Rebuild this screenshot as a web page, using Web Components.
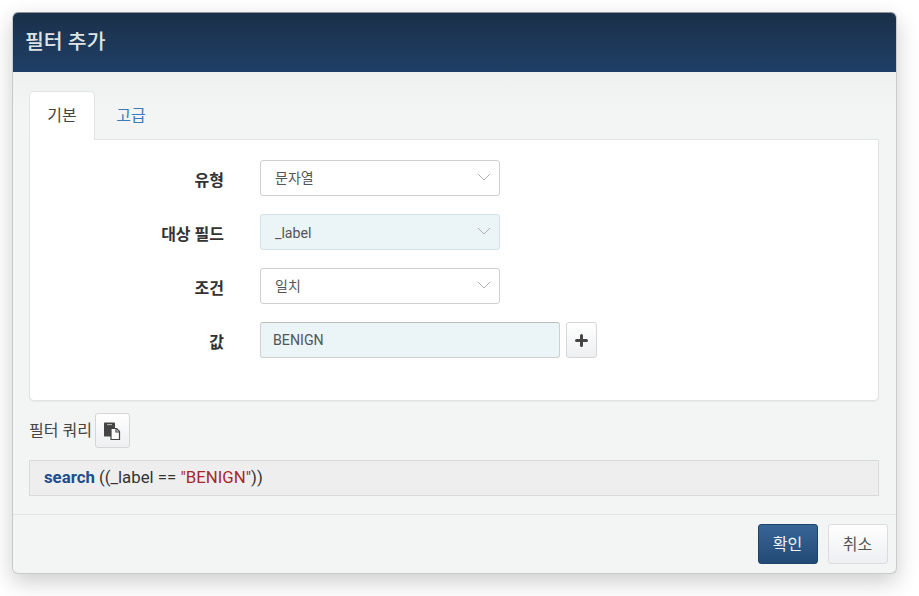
<!DOCTYPE html>
<html lang="ko">
<head>
<meta charset="utf-8">
<title>필터 추가</title>
<style>
  html, body { margin: 0; background: #fff; height: 100%; }
  body { box-sizing: border-box; padding-top: 12px; font-family: Roboto, "Noto Sans CJK KR", sans-serif; color: #444; }
</style>
</head>
<body>
<filter-dialog heading="필터 추가">
  <filter-tabs>
    <tab-item active>기본</tab-item>
    <tab-item>고급</tab-item>
  </filter-tabs>
  <tab-panel>
    <form-row label="유형"><select-box>문자열</select-box></form-row>
    <form-row label="대상 필드"><select-box filled>_label</select-box></form-row>
    <form-row label="조건"><select-box>일치</select-box></form-row>
    <form-row label="값">
      <value-input>BENIGN</value-input>
      <icon-button size="plus"><svg width="13" height="13" viewBox="0 0 13 13"><path d="M6.500 1.500v10M1.500 6.500h10" fill="none" stroke="#444" stroke-width="3" stroke-linecap="round"/></svg></icon-button>
    </form-row>
  </tab-panel>
  <query-head>
    <span>필터 쿼리</span>
    <icon-button size="copy"><svg width="18" height="18" viewBox="0 0 18 18"><path d="M1 1.500C1 .900 1.400.500 2 .500h9c.6 0 1 .4 1 1V14.500H2c-.6 0-1-.4-1-1z" fill="#444"/><path d="M4 2.600h5" stroke="#bbb" stroke-width="1"/><path d="M8 6.500h5.500L16.500 9.500v8H8z" fill="#fbfbfb" stroke="#444" stroke-width="1.200" stroke-linejoin="round"/><path d="M13 6.500v3.500h3.500" fill="none" stroke="#444" stroke-width="1.200"/></svg></icon-button>
  </query-head>
  <query-box><b>search</b> ((_label == <em>"BENIGN"</em>))</query-box>
  <action-button slot="footer" primary>확인</action-button>
  <action-button slot="footer">취소</action-button>
</filter-dialog>

<script>
const define = (name, css, html) => {
  customElements.define(name, class extends HTMLElement {
    connectedCallback(){
      if(this.shadowRoot){ return; }
      this.attachShadow({mode: 'open'});
      this.shadowRoot.innerHTML = `<style>${css}</style>${html(this)}`;
    }
  });
};

define('filter-dialog', `
  :host { box-sizing: border-box; width: 885px; height: 562px; margin: 0 0 0 11.500px;
    background: #f3f4f4; border: 1px solid #c9caca; border-top-color: #8f9499; border-radius: 6px;
    box-shadow: 0 8px 22px rgba(0,0,0,.2); display: flex; flex-direction: column; }
  header { flex: none; box-sizing: border-box; height: 59px; padding: 0 12.500px 5px; display: flex; align-items: center; border-radius: 5px 5px 0 0;
    background: linear-gradient(#1a3049, #1f3f66); color: #dfe3e7; font-size: 20.500px; font-weight: 500; }
  main { flex: 1; padding: 19px 16.500px 0 16.500px;
    background: linear-gradient(#eff0f0, #f3f4f4 40px); }
  footer { flex: none; box-sizing: border-box; height: 59px; border-top: 1px solid #e3e4e4; padding: 9px 8px 0 0;
    display: flex; justify-content: flex-end; gap: 10px; }
`, el => `<header>${el.getAttribute('heading')}</header><main><slot></slot></main><footer><slot name="footer"></slot></footer>`);

define('filter-tabs', `
  :host { display: flex; height: 49px; align-items: stretch; position: relative; z-index: 1; }
`, () => `<slot></slot>`);

define('tab-item', `
  :host { display: block; box-sizing: border-box; width: 72px; height: 49px; padding-top: 13px; text-align: center;
    font-size: 16px; line-height: 21px; color: #3b7cb8; border: 1px solid transparent; border-bottom: 0; border-radius: 5px 5px 0 0; }
  :host([active]) { width: 66px; background: #fff; color: #444; border-color: #e2e3e3; }
`, () => `<slot></slot>`);

define('tab-panel', `
  :host { display: flex; flex-direction: column; gap: 18px; box-sizing: border-box; height: 262px; margin-top: -1px; padding: 20px 0 0;
    background: #fff; border: 1px solid #e2e3e3; border-radius: 0 0 5px 5px; box-shadow: 0 1px 1px rgba(0,0,0,.05); }
`, () => `<slot></slot>`);

define('form-row', `
  :host { display: flex; align-items: center; height: 36px; }
  label { width: 194px; margin-right: 36px; padding-top: 2px; text-align: right; font-size: 16px; font-weight: 700; color: #333; }
  div { display: flex; align-items: center; gap: 6px; }
`, el => `<label>${el.getAttribute('label')}</label><div><slot></slot></div>`);

define('select-box', `
  :host { display: flex; align-items: center; justify-content: space-between; box-sizing: border-box; width: 240px; height: 36px;
    padding: 0 8px 2px 14px; background: #fff; border: 1px solid #cfcfcf; border-radius: 3px; font-size: 14px; color: #555; }
  :host([filled]) { background: #ebf4f7; border-color: #cfe3ea; padding: 1px 8px 0 14px; font-size: 14.200px; }
  svg { display: block; margin-top: -1px; }
  :host([filled]) svg { margin-top: -3px; }
`, () => `<slot></slot><svg width="14" height="8" viewBox="0 0 14 8"><path d="M1 1l6 6 6-6" fill="none" stroke="#b0b0b0" stroke-width="1"/></svg>`);

define('value-input', `
  :host { display: flex; align-items: center; box-sizing: border-box; width: 300px; height: 36px; padding: 0 12px;
    background: #ebf4f7; border: 1px solid #cfcfcf; border-top-color: #bcbcbc; border-radius: 3px; font-size: 14.200px; color: #555; }
`, () => `<slot></slot>`);

define('icon-button', `
  :host { display: flex; align-items: center; justify-content: center; box-sizing: border-box; width: 31px; height: 36px;
    background: linear-gradient(#fff, #edeff1); border: 1px solid #d6d6d6; border-radius: 3px; }
  :host([size=copy]) { width: 35px; height: 35px; }
  :host([size=plus]) svg { margin: -2px 1px 0 0; }
  svg { display: block; }
`, () => `<slot></slot>`);

define('query-head', `
  :host { display: flex; align-items: center; gap: 3px; height: 35px; margin-top: 12px; font-size: 16px; color: #444; }
  ::slotted(span) { margin-top: -3px; }
`, () => `<slot></slot>`);

define('query-box', `
  :host { display: block; box-sizing: border-box; height: 36px; margin-top: 12px; padding: 0 14px; line-height: 33px;
    background: #eeeeee; border: 1px solid #d9dada; font-size: 16.800px; color: #333; }
  ::slotted(b) { color: #204d8c; font-weight: 700; }
  ::slotted(em) { color: #a52a2a; font-style: normal; }
`, () => `<slot></slot>`);

define('action-button', `
  :host { display: flex; align-items: center; justify-content: center; box-sizing: border-box; width: 60px; height: 40px; padding-bottom: 2px;
    background: linear-gradient(#fff, #edeff2); border: 1px solid #dcdcdc; border-radius: 3px; font-size: 16px; color: #555; }
  :host([primary]) { background: linear-gradient(#386596, #234a76); border-color: #1f4368; color: #f0f3f6; }
`, () => `<slot></slot>`);
</script>
</body>
</html>
